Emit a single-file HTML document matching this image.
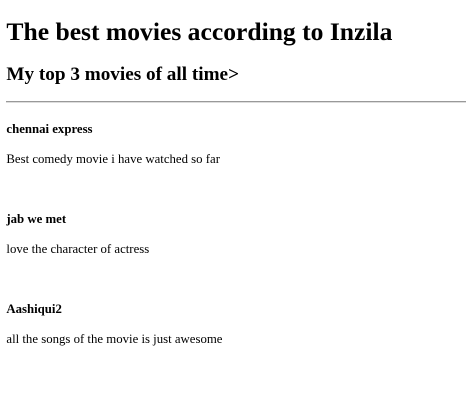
<!DOCTYPE html>
<html><head><meta charset="utf-8"><style>
body{margin:6.4px;font-family:"Liberation Serif",serif;font-size:12.8px;color:#000;background:#fff}
h1{font-size:25.6px;margin:17.15px 0}
h2{font-size:19.2px;margin:15.9px 0 15px}
h4{font-size:12.8px;margin:17px 0 15px}
h4.f{margin-top:19px}
p{margin:12.8px 0}
hr{margin:6.4px -6px 6.4px 0;border:0;border-top:1px solid #999;border-bottom:1px solid #ddd}
.sp{height:15px}
</style></head><body>
<h1>The best movies according to Inzila</h1>
<h2>My top 3 movies of all time&gt;</h2>
<hr>
<h4 class="f">chennai express</h4>
<p>Best comedy movie i have watched so far</p>
<div class="sp"></div>
<h4>jab we met</h4>
<p>love the character of actress</p>
<div class="sp"></div>
<h4>Aashiqui2</h4>
<p>all the songs of the movie is just awesome</p>
</body></html>
